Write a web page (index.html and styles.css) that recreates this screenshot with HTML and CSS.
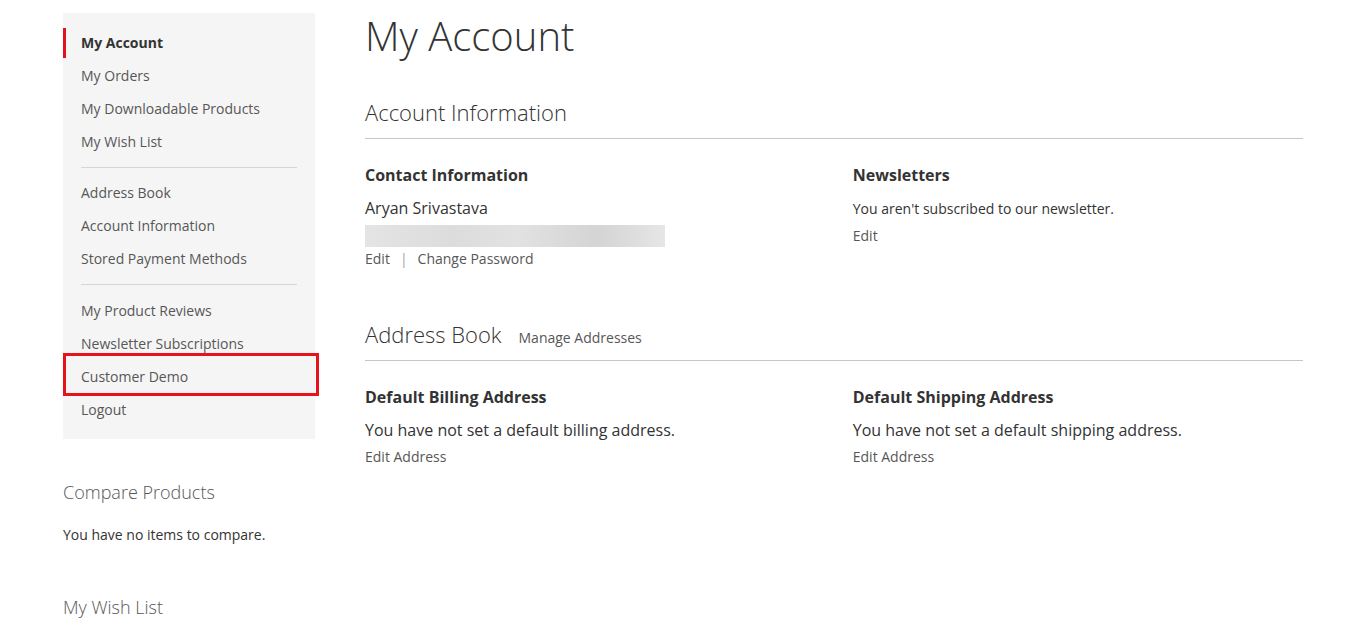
FILE: index.html
```html
<!DOCTYPE html>
<html lang="en">
<head>
<meta charset="utf-8">
<title>My Account</title>
<link rel="stylesheet" href="styles.css">
</head>
<body>
<div class="page">
  <aside class="sidebar">
    <nav class="account-nav">
      <ul class="nav-list">
        <li class="nav-item current"><strong>My Account</strong></li>
        <li class="nav-item"><a href="#">My Orders</a></li>
        <li class="nav-item"><a href="#">My Downloadable Products</a></li>
        <li class="nav-item"><a href="#">My Wish List</a></li>
        <li class="delimiter"></li>
        <li class="nav-item"><a href="#">Address Book</a></li>
        <li class="nav-item"><a href="#">Account Information</a></li>
        <li class="nav-item"><a href="#">Stored Payment Methods</a></li>
        <li class="delimiter delimiter-wide"></li>
        <li class="nav-item"><a href="#">My Product Reviews</a></li>
        <li class="nav-item"><a href="#">Newsletter Subscriptions</a></li>
        <li class="nav-item highlighted"><a href="#">Customer Demo</a><span class="annot-box"></span></li>
        <li class="nav-item"><a href="#">Logout</a></li>
      </ul>
    </nav>
    <div class="block compare">
      <div class="block-title">Compare Products</div>
      <div class="block-content">You have no items to compare.</div>
    </div>
    <div class="block wishlist">
      <div class="block-title">My Wish List</div>
    </div>
  </aside>

  <main class="main">
    <h1 class="page-title">My Account</h1>

    <section class="section">
      <div class="section-title"><span class="st-text">Account Information</span></div>
      <div class="boxes">
        <div class="box">
          <div class="box-title">Contact Information</div>
          <div class="box-content">
            <p class="name">Aryan Srivastava</p>
            <div class="blurred"></div>
          </div>
          <div class="box-actions tight"><a href="#">Edit</a><span class="sep">|</span><a href="#">Change Password</a></div>
        </div>
        <div class="box">
          <div class="box-title">Newsletters</div>
          <div class="box-content small">
            <p>You aren't subscribed to our newsletter.</p>
          </div>
          <div class="box-actions"><a href="#">Edit</a></div>
        </div>
      </div>
    </section>

    <section class="section addr">
      <div class="section-title"><span class="st-text">Address Book</span><a class="st-link" href="#">Manage Addresses</a></div>
      <div class="boxes">
        <div class="box">
          <div class="box-title">Default Billing Address</div>
          <div class="box-content"><p>You have not set a default billing address.</p></div>
          <div class="box-actions addr-actions"><a href="#">Edit Address</a></div>
        </div>
        <div class="box">
          <div class="box-title">Default Shipping Address</div>
          <div class="box-content"><p>You have not set a default shipping address.</p></div>
          <div class="box-actions addr-actions"><a href="#">Edit Address</a></div>
        </div>
      </div>
    </section>
  </main>
</div>
</body>
</html>
```

FILE: styles.css
```css
* { box-sizing: border-box; }
html, body { margin: 0; padding: 0; background: #fff; }
body {
  font-family: "Open Sans", "Liberation Sans", sans-serif;
  color: #333;
  font-size: 14px;
  line-height: 1.42857;
}
a { color: #575757; text-decoration: none; }
p { margin: 0; }

.page {
  display: flex;
  gap: 50px;
  padding: 13px 63px 0;
}

.sidebar { width: 252px; flex: none; }

.account-nav {
  background: #f5f5f5;
  padding: 15px 0 14px;
}
.nav-list { list-style: none; margin: 0; padding: 0; }
.nav-item {
  position: relative;
  margin-bottom: 3px;
}
.nav-item:last-child { margin-bottom: 0; }
.nav-item a, .nav-item strong {
  display: block;
  padding: 5px 18px;
  font-size: 14px;
  line-height: 20px;
  color: #575757;
}
.nav-item.current strong {
  color: #333;
  font-weight: 700;
  border-left: 3px solid #e0141e;
  padding-left: 15px;
}
.delimiter {
  border-top: 1px solid #d6d6d6;
  margin: 10px 18px 10px;
}
.delimiter-wide { margin-bottom: 11px; }
.annot-box {
  position: absolute;
  left: 0;
  right: -4px;
  top: -9px;
  bottom: -4px;
  border: 3px solid #e8121a;
  pointer-events: none;
}

.block { margin-top: 41px; }
.block-title {
  font-size: 18px;
  font-weight: 300;
  line-height: 24px;
  color: #575757;
}
.block-content {
  margin-top: 21px;
  font-size: 14px;
  color: #333;
}
.block.wishlist { margin-top: 50px; }

.main { flex: 1; min-width: 0; }

.page-title {
  margin: 0;
  font-size: 40px;
  font-weight: 300;
  line-height: 46px;
  color: #333;
}

.section { margin-top: 39px; }
.section.addr { margin-top: 51px; }
.section-title {
  display: flex;
  align-items: baseline;
  gap: 17px;
  border-bottom: 1px solid #c6c6c6;
  padding-bottom: 12px;
  margin-bottom: 25px;
}
.st-text {
  font-size: 22px;
  font-weight: 300;
  line-height: 28px;
  color: #333;
}
.st-link { font-size: 14px; color: #575757; }

.boxes { display: flex; justify-content: space-between; }
.box { width: 48%; }
.box-title {
  font-size: 16px;
  font-weight: 700;
  line-height: 22px;
  color: #333;
  margin-bottom: 11px;
}
.box-content { font-size: 16px; line-height: 22px; color: #333; }
.box-content.small { font-size: 14px; line-height: 20px; padding-top: 2px; }
.name { margin-bottom: 6px; }
.blurred {
  width: 300px;
  height: 22px;
  background: linear-gradient(90deg, #e4e4e4 0%, #dcdcdc 30%, #e2e2e2 50%, #d4d4d4 78%, #e6e6e6 100%);
}
.box-actions {
  margin-top: 7px;
  font-size: 14px;
  line-height: 20px;
}
.box-actions.tight { margin-top: 2px; }
.box-actions.addr-actions { margin-top: 6px; }
.box-actions a { color: #575757; }
.sep { color: #a6a6a6; margin: 0 10px; }
```
